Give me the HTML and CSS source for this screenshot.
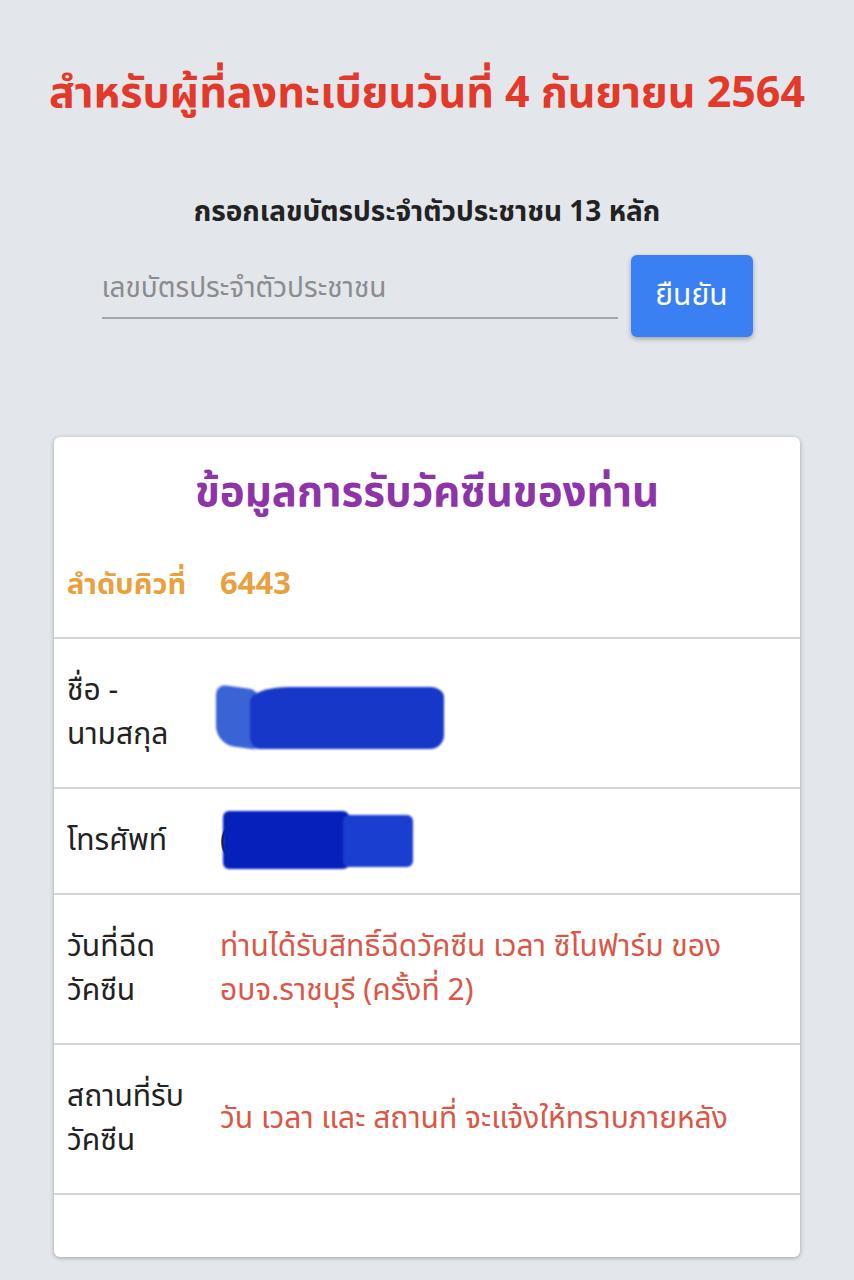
FILE: index.html
```html
<!DOCTYPE html>
<html lang="th">
<head>
<meta charset="utf-8">
<link rel="stylesheet" href="styles.css">
</head>
<body>
<div class="page">
  <h1 class="title">สำหรับผู้ที่ลงทะเบียนวันที่ 4 กันยายน 2564</h1>
  <div class="form">
    <div class="form-label">กรอกเลขบัตรประจำตัวประชาชน 13 หลัก</div>
    <div class="form-row">
      <div class="input">เลขบัตรประจำตัวประชาชน</div>
      <button class="btn">ยืนยัน</button>
    </div>
  </div>
  <div class="card">
    <h2 class="card-title">ข้อมูลการรับวัคซีนของท่าน</h2>
    <div class="row row-queue">
      <div class="label">ลำดับคิวที่</div>
      <div class="value">6443</div>
    </div>
    <div class="row">
      <div class="label">ชื่อ -<br>นามสกุล</div>
      <div class="value"><span class="redact redact-name"><span class="blob b1"></span><span class="blob b2"></span></span></div>
    </div>
    <div class="row">
      <div class="label">โทรศัพท์</div>
      <div class="value"><span class="paren">(</span><span class="redact redact-phone"><span class="blob b3"></span><span class="blob b4"></span></span></div>
    </div>
    <div class="row">
      <div class="label">วันที่ฉีด<br>วัคซีน</div>
      <div class="value red">ท่านได้รับสิทธิ์ฉีดวัคซีน เวลา ซิโนฟาร์ม ของ<br>อบจ.ราชบุรี (ครั้งที่ 2)</div>
    </div>
    <div class="row">
      <div class="label">สถานที่รับ<br>วัคซีน</div>
      <div class="value red">วัน เวลา และ สถานที่ จะแจ้งให้ทราบภายหลัง</div>
    </div>
    <div class="row row-empty"></div>
  </div>
</div>
</body>
</html>
```
FILE: styles.css
```css
html, body {
  margin: 0;
  padding: 0;
  background: #e3e6ea;
}
body {
  font-family: "Noto Sans Thai", Roboto, "Noto Sans", sans-serif;
  color: #222;
}
.page {
  width: 854px;
  height: 1280px;
  overflow: hidden;
  display: flex;
  flex-direction: column;
  align-items: center;
}
.title {
  margin: 64px 0 0;
  font-size: 43px;
  line-height: 60px;
  font-weight: 700;
  color: #e3392b;
  text-align: center;
  white-space: nowrap;
}
.form {
  margin-top: 69px;
  display: flex;
  flex-direction: column;
  align-items: center;
}
.form-label {
  font-size: 28px;
  font-weight: 700;
  line-height: 40px;
  color: #222;
}
.form-row {
  margin-top: 22px;
  display: flex;
  align-items: flex-start;
  gap: 13px;
}
.input {
  width: 516px;
  height: 64px;
  box-sizing: border-box;
  border-bottom: 2px solid #a3a5a9;
  font-size: 28px;
  line-height: 40px;
  color: #8a8c90;
  padding-top: 14px;
}
.btn {
  width: 122px;
  height: 82px;
  border: none;
  border-radius: 6px;
  background: #3a80f2;
  color: #fff;
  font-family: inherit;
  font-size: 30px;
  box-shadow: 0 2px 5px rgba(0,0,0,0.3);
  padding: 0;
}
.card {
  margin-top: 100px;
  width: 746px;
  background: #fff;
  border-radius: 6px;
  box-shadow: 0 1px 4px rgba(0,0,0,0.3);
  overflow: hidden;
}
.card-title {
  margin: 0;
  padding: 26px 0 10px;
  font-size: 42px;
  line-height: 60px;
  font-weight: 700;
  color: #8d35a8;
  text-align: center;
}
.row {
  display: grid;
  grid-template-columns: 166px 1fr;
  align-items: center;
  padding: 30px 0;
  border-bottom: 2px solid #d5d5d5;
  font-size: 30px;
  line-height: 44px;
}
.row-empty {
  border-bottom: none;
  height: 2px;
}
.label {
  padding-left: 13px;
  color: #222;
}
.value {
  padding-right: 10px;
}
.red {
  color: #db5646;
}
.row-queue .label,
.row-queue .value {
  color: #e9a03e;
  font-weight: 700;
}
.row-queue .label {
  font-size: 29px;
}
.row-queue .value {
  font-size: 31px;
}
.redact {
  display: inline-block;
  position: relative;
  height: 44px;
  vertical-align: top;
}
.blob {
  position: absolute;
  filter: blur(1.2px);
}
.redact-name {
  width: 228px;
}
.b1 {
  left: -4px;
  top: -4px;
  width: 42px;
  height: 60px;
  background: #3a63d6;
  border-radius: 10px 8px 6px 18px;
  transform: skewY(8deg);
}
.b2 {
  left: 30px;
  top: -4px;
  width: 194px;
  height: 62px;
  background: #1737c9;
  border-radius: 40px 14px 14px 10px / 14px 10px 14px 12px;
}
.paren {
  color: #222;
}
.redact-phone {
  width: 190px;
  margin-left: -6px;
}
.b3 {
  left: 0;
  top: -8px;
  width: 126px;
  height: 58px;
  background: #0620bc;
  border-radius: 6px;
}
.b4 {
  left: 120px;
  top: -4px;
  width: 70px;
  height: 52px;
  background: #1a3ed0;
  border-radius: 6px;
}
```
